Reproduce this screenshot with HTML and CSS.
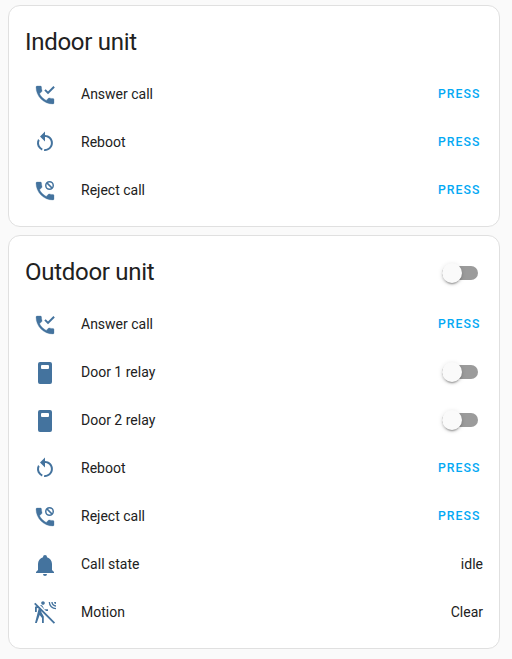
FILE: index.html
```html
<!DOCTYPE html>
<html lang="en">
<head>
<meta charset="utf-8">
<title>Intercom</title>
<link rel="stylesheet" href="styles.css">
</head>
<body>
<svg class="sprite" aria-hidden="true">
  <defs>
    <path id="handset" d="M20 15.5C18.8 15.5 17.5 15.3 16.4 14.9H16.1C15.8 14.9 15.6 15 15.4 15.2L13.2 17.4C10.4 15.9 8 13.6 6.6 10.8L8.8 8.6C9.1 8.3 9.2 7.9 9 7.6C8.7 6.5 8.5 5.2 8.5 4C8.5 3.5 8 3 7.5 3H4C3.5 3 3 3.5 3 4C3 13.4 10.6 21 20 21C20.5 21 21 20.5 21 20V16.5C21 16 20.5 15.5 20 15.5Z"/>
    <mask id="slash-cut" maskUnits="userSpaceOnUse" x="0" y="0" width="24" height="24">
      <path fill="#fff" d="M0 0H24V24H0Z"/>
      <path fill="none" stroke="#000" stroke-width="2" d="M2.3 0.7L24 22.4"/>
    </mask>
  </defs>
  <symbol id="phone-check" viewBox="0 0 24 24">
    <use href="#handset" stroke="currentColor" stroke-width="0.3"/>
    <path d="M15 11.2L11.3 7.6L12.7 6.2L15 8.4L20.4 3.1L21.8 4.5Z"/>
  </symbol>
  <symbol id="phone-cancel" viewBox="0 0 24 24">
    <use href="#handset" stroke="currentColor" stroke-width="0.3"/>
    <path fill="none" stroke="currentColor" stroke-width="1.5" d="M20.25 6.5A3.75 3.75 0 1 1 12.75 6.5A3.75 3.75 0 1 1 20.25 6.5M13.9 3.9L19.1 9.1"/>
  </symbol>
  <symbol id="restart" viewBox="0 0 24 24">
    <path d="M12,4C14.1,4 16.1,4.8 17.6,6.3C20.7,9.4 20.7,14.5 17.6,17.6C15.8,19.5 13.3,20.2 10.9,19.9L11.4,17.9C13.1,18.1 14.9,17.5 16.2,16.2C18.5,13.9 18.5,10.1 16.2,7.7C15.1,6.6 13.5,6 12,6V10.6L7,5.6L12,0.6V4M6.3,17.6C3.7,15 3.3,11 5.1,7.9L6.6,9.4C5.5,11.6 5.9,14.4 7.8,16.2C8.3,16.7 8.9,17.1 9.6,17.4L9,19.4C8,19 7.1,18.4 6.3,17.6Z"/>
  </symbol>
  <symbol id="switch" viewBox="0 0 24 24">
    <path fill-rule="evenodd" d="M7 1H17A2 2 0 0 1 19 3V21A2 2 0 0 1 17 23H7A2 2 0 0 1 5 21V3A2 2 0 0 1 7 1M9 4A1 1 0 0 0 8 5V7A1 1 0 0 0 9 8H15A1 1 0 0 0 16 7V5A1 1 0 0 0 15 4Z"/>
  </symbol>
  <symbol id="bell" viewBox="0 0 24 24">
    <path d="M21,19V20H3V19L5,17V11C5,7.9 7.03,5.17 10,4.29C10,4.19 10,4.1 10,4A2,2 0 0,1 12,2A2,2 0 0,1 14,4C14,4.1 14,4.19 14,4.29C16.97,5.17 19,7.9 19,11V17L21,19M14,21A2,2 0 0,1 12,23A2,2 0 0,1 10,21"/>
  </symbol>
  <symbol id="motion-off" viewBox="0 0 24 24">
    <path mask="url(#slash-cut)" d="M10,0.2C9,0.2 8.2,1 8.2,2C8.2,3 9,3.8 10,3.8C11,3.8 11.8,3 11.8,2C11.8,1 11,0.2 10,0.2M15.67,1A7.33,7.33 0 0,0 23,8.33V7A6,6 0 0,1 17,1H15.67M18.33,1C18.33,3.58 20.42,5.67 23,5.67V4.33C21.16,4.33 19.67,2.84 19.67,1H18.33M21,1A2,2 0 0,0 23,3V1H21M7.92,4.03C7.75,4.03 7.58,4.06 7.42,4.11L2,5.8V11H3.8V7.33L5.91,6.67L2,22H3.8L6.67,13.89L9,17V22H10.8V15.59L8.31,11.05L9.04,8.18L10.12,10H15V8.2H11.38L9.38,4.87C9.08,4.37 8.54,4.03 7.92,4.03Z"/>
    <path d="M2.4 1.8L1.1 3.1L20.8 22.7L22.1 21.4Z"/>
  </symbol>
</svg>

<main class="column">
  <section class="card">
    <header class="card-header"><h1 class="title">Indoor unit</h1></header>
    <div class="rows">
      <div class="row"><svg class="icon"><use href="#phone-check"/></svg><span class="name">Answer call</span><button class="press">PRESS</button></div>
      <div class="row"><svg class="icon"><use href="#restart"/></svg><span class="name">Reboot</span><button class="press">PRESS</button></div>
      <div class="row"><svg class="icon"><use href="#phone-cancel"/></svg><span class="name">Reject call</span><button class="press">PRESS</button></div>
    </div>
  </section>

  <section class="card">
    <header class="card-header"><h1 class="title">Outdoor unit</h1><span class="toggle" role="switch" aria-checked="false"></span></header>
    <div class="rows">
      <div class="row"><svg class="icon"><use href="#phone-check"/></svg><span class="name">Answer call</span><button class="press">PRESS</button></div>
      <div class="row"><svg class="icon"><use href="#switch"/></svg><span class="name">Door 1 relay</span><span class="toggle" role="switch" aria-checked="false"></span></div>
      <div class="row"><svg class="icon"><use href="#switch"/></svg><span class="name">Door 2 relay</span><span class="toggle" role="switch" aria-checked="false"></span></div>
      <div class="row"><svg class="icon"><use href="#restart"/></svg><span class="name">Reboot</span><button class="press">PRESS</button></div>
      <div class="row"><svg class="icon"><use href="#phone-cancel"/></svg><span class="name">Reject call</span><button class="press">PRESS</button></div>
      <div class="row"><svg class="icon"><use href="#bell"/></svg><span class="name">Call state</span><span class="state">idle</span></div>
      <div class="row"><svg class="icon"><use href="#motion-off"/></svg><span class="name">Motion</span><span class="state">Clear</span></div>
    </div>
  </section>
</main>
</body>
</html>
```
FILE: styles.css
```css
* {
  box-sizing: border-box;
}

body {
  margin: 0;
  background: #fafafa;
  color: #212121;
  font: 14px/20px Roboto, sans-serif;
}

.sprite {
  position: absolute;
  width: 0;
  height: 0;
}

.column {
  display: flex;
  flex-direction: column;
  gap: 8px;
  padding: 5px 12px 10px 8px;
}

.card {
  background: #fff;
  border: 1px solid #e0e0e0;
  border-radius: 12px;
  padding: 0 16px 16px;
}

.card-header {
  display: flex;
  align-items: center;
  justify-content: space-between;
  padding: 12px 0 8px;
}

.title {
  margin: 0;
  font-size: 24px;
  font-weight: 400;
  line-height: 48px;
  letter-spacing: -0.288px;
}

.rows {
  display: grid;
  gap: 8px;
}

.row {
  display: flex;
  align-items: center;
  height: 40px;
}

.icon {
  width: 24px;
  height: 24px;
  margin: 2px 24px 0 8px;
  color: #44739e;
  fill: currentColor;
}

.name {
  flex: 1;
}

.press {
  border: 0;
  padding: 0;
  margin-right: 2.4px;
  background: none;
  color: #03a9f4;
  font: 500 12.25px/36px Roboto, sans-serif;
  letter-spacing: 1.09px;
}

.toggle {
  display: flex;
  align-items: center;
  width: 36px;
  height: 14px;
  margin-right: 5px;
  border-radius: 7px;
  background: #9b9b9b;
}

.card-header .toggle {
  margin-top: 2px;
}

.toggle::before {
  content: "";
  width: 20px;
  height: 20px;
  flex: none;
  border-radius: 50%;
  background: #fafafa;
  box-shadow: 0 3px 1px -2px rgba(0, 0, 0, 0.2), 0 2px 2px rgba(0, 0, 0, 0.14), 0 1px 5px rgba(0, 0, 0, 0.12);
}
```
